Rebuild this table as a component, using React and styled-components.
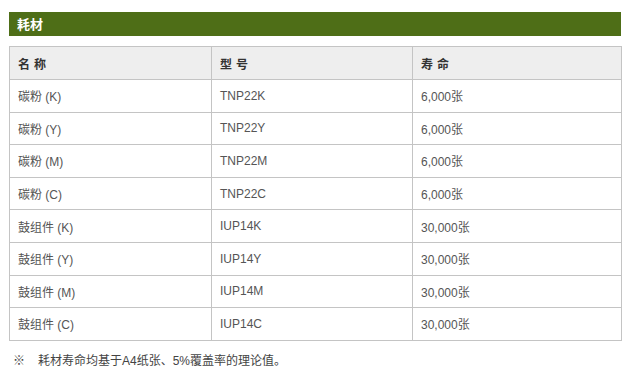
import React from "react";
import styled, { createGlobalStyle } from "styled-components";

const GlobalStyle = createGlobalStyle`
  body {
    margin: 0;
    background: #fff;
    font-family: "Liberation Sans", Arial, "Noto Sans CJK SC", sans-serif;
  }
`;

const Page = styled.div`
  padding: 12px 9px 0 9px;
  width: 612px;
`;

const TitleBar = styled.h3`
  margin: 0;
  height: 24px;
  line-height: 24px;
  padding-left: 8px;
  background: #4e6e17;
  color: #fff;
  font-size: 13px;
  font-weight: bold;
  font-family: "Noto Sans CJK SC", sans-serif;
`;

const Table = styled.table`
  margin-top: 10px;
  width: 612px;
  border-collapse: collapse;
  table-layout: fixed;
  font-size: 12px;
  color: #555;
`;

const Head = styled.th`
  height: 32px;
  padding: 0 0 0 8px;
  background: #eeeeee;
  border: 1px solid #c4c4c4;
  text-align: left;
  font-weight: bold;
  color: #333;
  letter-spacing: 4px;
  font-family: "Noto Sans CJK SC", sans-serif;
`;

const Cell = styled.td`
  height: 31.6px;
  padding: 0 0 0 8px;
  border: 1px solid #c4c4c4;
  font-family: "Liberation Sans", Arial, "Noto Sans CJK SC", sans-serif;
`;

const Note = styled.p`
  margin: 10px 0 0 4px;
  font-size: 12px;
  color: #444;
  display: flex;
  gap: 13px;
`;

const rows = [
  ["碳粉 (K)", "TNP22K", "6,000张"],
  ["碳粉 (Y)", "TNP22Y", "6,000张"],
  ["碳粉 (M)", "TNP22M", "6,000张"],
  ["碳粉 (C)", "TNP22C", "6,000张"],
  ["鼓组件 (K)", "IUP14K", "30,000张"],
  ["鼓组件 (Y)", "IUP14Y", "30,000张"],
  ["鼓组件 (M)", "IUP14M", "30,000张"],
  ["鼓组件 (C)", "IUP14C", "30,000张"],
];

export default function App() {
  return (
    <Page>
      <GlobalStyle />
      <TitleBar>耗材</TitleBar>
      <Table>
        <colgroup>
          <col style={{ width: 202 }} />
          <col style={{ width: 201 }} />
          <col style={{ width: 209 }} />
        </colgroup>
        <thead>
          <tr>
            <Head>名称</Head>
            <Head>型号</Head>
            <Head>寿命</Head>
          </tr>
        </thead>
        <tbody>
          {rows.map((r) => (
            <tr key={r[1]}>
              {r.map((c, i) => (
                <Cell key={i}>{c}</Cell>
              ))}
            </tr>
          ))}
        </tbody>
      </Table>
      <Note>
        <span>※</span>
        <span>耗材寿命均基于A4纸张、5%覆盖率的理论值。</span>
      </Note>
    </Page>
  );
}
